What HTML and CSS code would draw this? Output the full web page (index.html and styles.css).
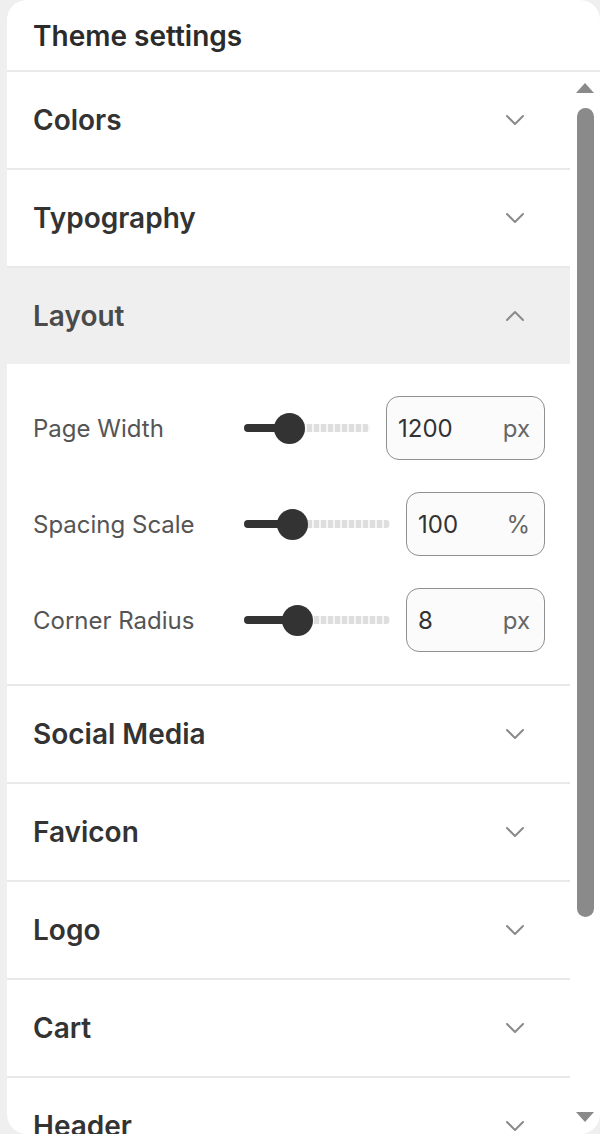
FILE: index.html
```html
<!DOCTYPE html>
<html lang="en">
<head>
<meta charset="utf-8">
<title>Theme settings</title>
<link rel="stylesheet" href="styles.css">
</head>
<body>
<div class="panel">
  <header class="panel-head"><h1 class="panel-title">Theme settings</h1></header>
  <div class="panel-body">
    <div class="list">
      <section class="group">
        <div class="group-head"><h2 class="group-title">Colors</h2><svg class="chev" viewBox="0 0 20 12"><path d="M2 2 L10 10 L18 2"/></svg></div>
      </section>
      <section class="group">
        <div class="group-head"><h2 class="group-title">Typography</h2><svg class="chev" viewBox="0 0 20 12"><path d="M2 2 L10 10 L18 2"/></svg></div>
      </section>
      <section class="group open">
        <div class="group-head active"><h2 class="group-title">Layout</h2><svg class="chev" viewBox="0 0 20 12"><path d="M2 10 L10 2 L18 10"/></svg></div>
        <div class="group-content">
          <div class="field">
            <span class="field-label">Page Width</span>
            <div class="slider" style="--p:0.32"><span class="fill"></span><span class="knob"></span></div>
            <div class="num wide"><span class="num-val">1200</span><span class="num-unit">px</span></div>
          </div>
          <div class="field">
            <span class="field-label">Spacing Scale</span>
            <div class="slider" style="--p:0.29"><span class="fill"></span><span class="knob"></span></div>
            <div class="num"><span class="num-val">100</span><span class="num-unit">%</span></div>
          </div>
          <div class="field">
            <span class="field-label">Corner Radius</span>
            <div class="slider" style="--p:0.33"><span class="fill"></span><span class="knob"></span></div>
            <div class="num"><span class="num-val">8</span><span class="num-unit">px</span></div>
          </div>
        </div>
      </section>
      <section class="group">
        <div class="group-head"><h2 class="group-title">Social Media</h2><svg class="chev" viewBox="0 0 20 12"><path d="M2 2 L10 10 L18 2"/></svg></div>
      </section>
      <section class="group">
        <div class="group-head"><h2 class="group-title">Favicon</h2><svg class="chev" viewBox="0 0 20 12"><path d="M2 2 L10 10 L18 2"/></svg></div>
      </section>
      <section class="group">
        <div class="group-head"><h2 class="group-title">Logo</h2><svg class="chev" viewBox="0 0 20 12"><path d="M2 2 L10 10 L18 2"/></svg></div>
      </section>
      <section class="group">
        <div class="group-head"><h2 class="group-title">Cart</h2><svg class="chev" viewBox="0 0 20 12"><path d="M2 2 L10 10 L18 2"/></svg></div>
      </section>
      <section class="group">
        <div class="group-head"><h2 class="group-title">Header</h2><svg class="chev" viewBox="0 0 20 12"><path d="M2 2 L10 10 L18 2"/></svg></div>
      </section>
    </div>
    <div class="scrollbar">
      <span class="arrow arrow-up"></span>
      <div class="track"><div class="thumb"></div></div>
      <span class="arrow arrow-down"></span>
    </div>
  </div>
</div>
</body>
</html>
```
FILE: styles.css
```css
* { box-sizing: border-box; }
html, body { margin: 0; padding: 0; }
body {
  background: #efefef;
  font-family: Inter, "Noto Sans", sans-serif;
  color: #333;
  width: 600px;
  height: 1134px;
  overflow: hidden;
}
.panel {
  margin-left: 7px;
  width: 593px;
  height: 1134px;
  background: #fff;
  border-radius: 20px;
  overflow: hidden;
  display: flex;
  flex-direction: column;
}
.panel-head {
  height: 72px;
  flex: none;
  border-bottom: 2px solid #e9e9e9;
  display: flex;
  align-items: center;
  padding: 2px 26px 0;
}
.panel-title {
  margin: 0;
  font-size: 28px;
  font-weight: 600;
  color: #2b2b2b;
}
.panel-body {
  flex: 1;
  display: flex;
  min-height: 0;
}
.list {
  width: 563px;
  flex: none;
  overflow: hidden;
}
.group { border-bottom: 2px solid #e9e9e9; }
.group-head {
  height: 96px;
  display: flex;
  align-items: center;
  justify-content: space-between;
  padding: 0 45px 0 26px;
}
.group-head.active { background: #efefef; }
.group-title {
  margin: 0;
  font-size: 28px;
  font-weight: 600;
  color: #333;
}
.active .group-title { color: #4a4a4a; }
.chev {
  width: 20px;
  height: 12px;
  fill: none;
  stroke: #8a8a8a;
  stroke-width: 2;
  stroke-linecap: round;
  stroke-linejoin: round;
}
.group-content {
  padding: 32px 25px 32px 26px;
  display: flex;
  flex-direction: column;
  gap: 32px;
}
.field {
  height: 64px;
  display: flex;
  align-items: center;
  gap: 16px;
}
.field-label {
  width: 195px;
  flex: none;
  font-size: 24px;
  color: #555;
  white-space: nowrap;
}
.slider {
  flex: 1;
  height: 8px;
  position: relative;
  border-radius: 4px;
  background: repeating-linear-gradient(90deg, #dedede 0 5px, #f6f6f6 5px 7px);
}
.fill {
  position: absolute;
  left: 0;
  top: 0;
  height: 8px;
  border-radius: 4px;
  background: #333;
  width: calc(var(--p) * (100% - 31px) + 15px);
}
.knob {
  position: absolute;
  top: 50%;
  left: calc(var(--p) * (100% - 31px));
  width: 31px;
  height: 31px;
  margin-top: -15.5px;
  border-radius: 50%;
  background: #333;
}
.num {
  width: 139px;
  height: 64px;
  flex: none;
  border: 1px solid #8f8f8f;
  border-radius: 13px;
  background: #fbfbfb;
  display: flex;
  align-items: center;
  justify-content: space-between;
  padding: 0 14px 0 11px;
  font-size: 24px;
}
.num.wide { width: 159px; }
.num-val { color: #333; }
.num-unit { color: #666; }
.scrollbar {
  flex: 1;
  display: flex;
  flex-direction: column;
  align-items: center;
  padding: 11px 0 12px;
}
.arrow {
  width: 0;
  height: 0;
  border-left: 9px solid transparent;
  border-right: 9px solid transparent;
  flex: none;
}
.arrow-up { border-bottom: 10px solid #8a8a8a; }
.arrow-down { border-top: 10px solid #8a8a8a; margin-top: auto; }
.track { padding-top: 15px; }
.thumb {
  width: 17px;
  height: 809px;
  border-radius: 9px;
  background: #8a8a8a;
}
```
